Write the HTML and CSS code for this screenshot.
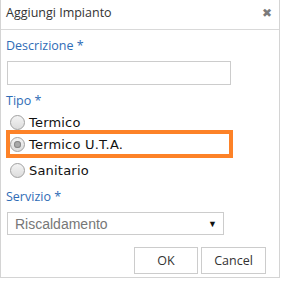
FILE: index.html
```html
<!DOCTYPE html>
<html lang="it">
<head>
    <meta charset="UTF-8">
    <title>Aggiungi Impianto</title>
    <link rel="stylesheet" href="styles.css">
</head>
<body>
    <div class="modal">
        <div class="modal-header">
            <span class="modal-title">Aggiungi Impianto</span>
            <span class="close">&#x2716;</span>
        </div>
        <div class="modal-body">
            <label class="field-label">Descrizione *</label>
            <div class="text-input"></div>

            <label class="field-label tipo">Tipo *</label>
            <div class="radio-list">
                <div class="radio-row"><span class="radio"></span>Termico</div>
                <div class="radio-row selected"><span class="radio checked"></span>Termico U.T.A.</div>
                <div class="radio-row"><span class="radio"></span>Sanitario</div>
            </div>

            <label class="field-label servizio">Servizio *</label>
            <div class="select">
                <span>Riscaldamento</span>
                <span class="arrow">&#9660;</span>
            </div>

            <div class="actions">
                <div class="btn">OK</div>
                <div class="btn">Cancel</div>
            </div>
        </div>
    </div>
</body>
</html>
```

FILE: styles.css
```css
body {
    margin: 0;
    background-color: #fff;
    font-family: 'Open Sans', sans-serif;
}
.modal {
    width: 280px;
    height: 278px;
    box-sizing: border-box;
    border: 1px solid #d4d4d4;
    border-top: none;
    background-color: #fff;
}
.modal-header {
    height: 30px;
    box-sizing: border-box;
    border-bottom: 1px solid #d9d9d9;
    display: flex;
    justify-content: space-between;
    align-items: center;
    padding: 0 7px 4px 5px;
}
.modal-title {
    font-size: 12.5px;
    color: #333;
}
.close {
    font-size: 12px;
    color: #7a7a7a;
    font-family: 'DejaVu Sans', sans-serif;
}
.modal-body {
    padding: 7px 0 0 5px;
}
.field-label {
    display: block;
    font-size: 12.5px;
    color: #2f6cb6;
    line-height: 17px;
}
.text-input {
    width: 224px;
    height: 24px;
    box-sizing: border-box;
    border: 1px solid #ccc;
    margin: 7px 0 0 1px;
}
.tipo {
    margin-top: 7px;
}
.radio-list {
    margin-top: 3px;
    font-family: 'DejaVu Sans', sans-serif;
    font-size: 13px;
    letter-spacing: 0.2px;
    color: #111;
}
.radio-row {
    height: 20px;
    display: flex;
    align-items: center;
    padding-left: 4px;
}
.radio-row.selected {
    width: 219px;
    border: 4px solid #fd8228;
    margin: -2px 0 0 0;
    padding-left: 0;
}
.radio-row.selected + .radio-row {
    margin-top: 2px;
}
.radio {
    width: 13px;
    height: 13px;
    border-radius: 50%;
    border: 1px solid #a0a0a0;
    background: linear-gradient(#f4f4f4, #dcdcdc);
    margin-right: 4px;
    position: relative;
    flex-shrink: 0;
}
.radio.checked::after {
    content: '';
    position: absolute;
    top: 3px;
    left: 3px;
    width: 7px;
    height: 7px;
    border-radius: 50%;
    background: #a9a9a9;
    box-shadow: inset 0 0 0 1px #888;
}
.servizio {
    margin-top: 8px;
}
.select {
    width: 217px;
    height: 23px;
    box-sizing: border-box;
    border: 1px solid #ccc;
    margin: 7px 0 0 1px;
    display: flex;
    justify-content: space-between;
    align-items: center;
    padding: 0 6px 0 7px;
    font-family: 'Liberation Sans', Arial, sans-serif;
    font-size: 14px;
    color: #777;
}
.arrow {
    font-size: 9px;
    color: #111;
}
.actions {
    display: flex;
    justify-content: flex-end;
    gap: 3px;
    margin-top: 12px;
    padding-right: 13px;
}
.btn {
    width: 64px;
    height: 27px;
    box-sizing: border-box;
    border: 1px solid #ccc;
    display: flex;
    align-items: center;
    justify-content: center;
    font-size: 12.5px;
    color: #333;
}
.btn + .btn {
    width: 65px;
}
```
